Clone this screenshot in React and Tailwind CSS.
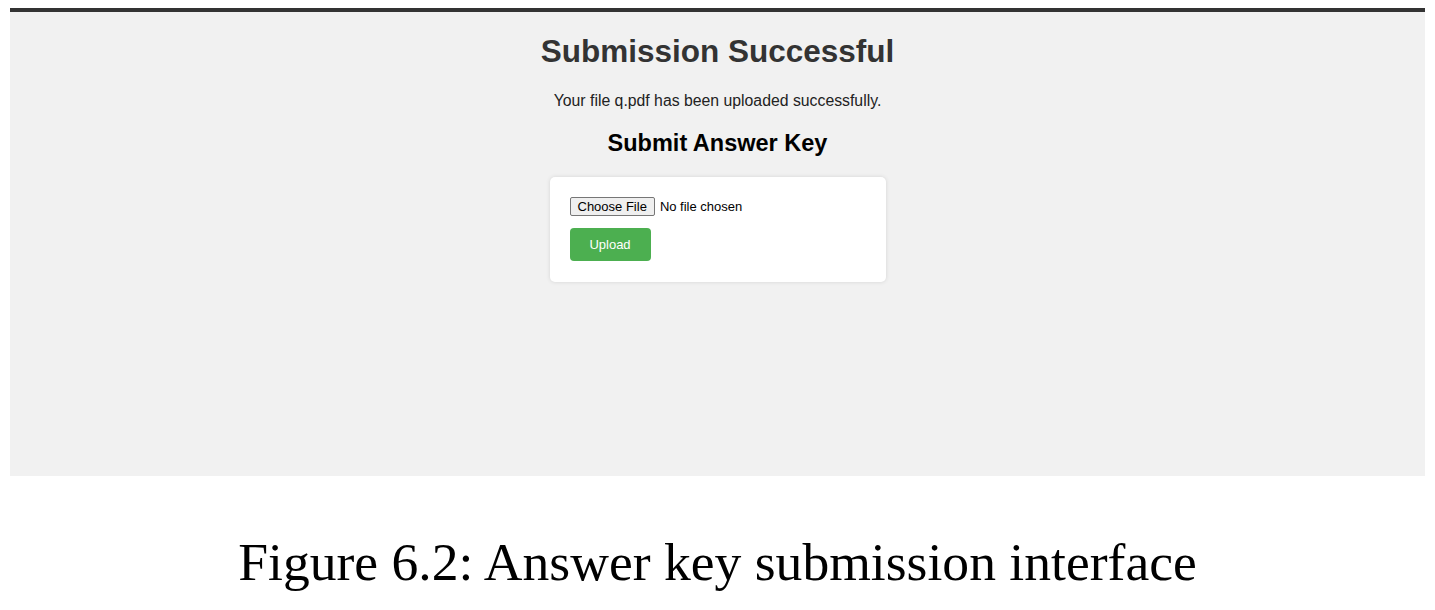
import React from "react";

const App = () => {
  return (
    <div className="w-[1435px] h-[610px] bg-white pt-[8px] px-[10px] overflow-hidden">
      {/* Screenshot area */}
      <div className="h-[468px] bg-[#f1f1f1] border-t-[4px] border-[#333333] flex flex-col items-center font-['Liberation_Sans',Arial,sans-serif]">
        <h1 className="mt-[24px] text-[31.5px] leading-none font-bold text-[#333333]">
          Submission Successful
        </h1>
        <p className="mt-[25px] text-[15.8px] leading-none text-[#222222]">
          Your file q.pdf has been uploaded successfully.
        </p>
        <h2 className="mt-[24px] text-[23.5px] leading-none font-bold text-black">
          Submit Answer Key
        </h2>

        {/* Upload card */}
        <div className="mt-[21px] w-[336px] bg-white rounded-[5px] shadow-[0_0_4px_rgba(0,0,0,0.12)] p-[20px] pb-[21px] flex flex-col items-start gap-[12px]">
          <div className="flex items-center gap-[5px] text-[13px] leading-none">
            <button
              type="button"
              className="h-[19px] px-[7px] bg-[#efefef] border border-[#767676] rounded-[2px] text-black"
            >
              Choose File
            </button>
            <span className="text-black">No file chosen</span>
          </div>
          <button
            type="button"
            className="h-[33px] w-[81px] bg-[#4caf50] rounded-[4px] text-white text-[13px]"
          >
            Upload
          </button>
        </div>
      </div>

      {/* Caption */}
      <p className="mt-[60px] text-center text-[53.6px] leading-none text-black font-['Liberation_Serif','Times_New_Roman',serif]">
        Figure 6.2: Answer key submission interface
      </p>
    </div>
  );
};

export default App;
